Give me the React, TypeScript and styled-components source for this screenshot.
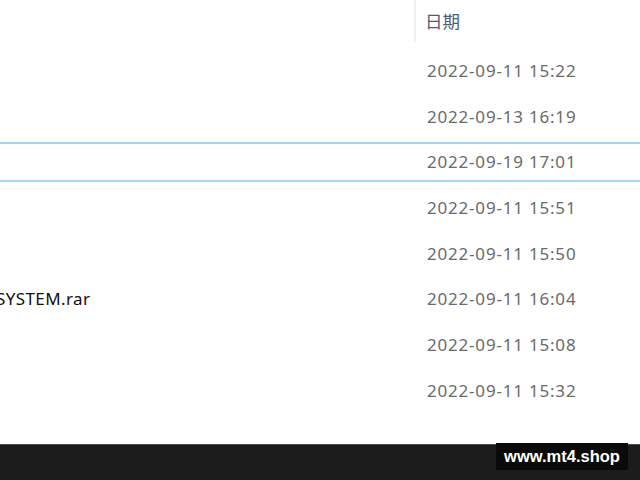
import React from 'react'
import styled, { createGlobalStyle } from 'styled-components'

const GlobalStyle = createGlobalStyle`
  html, body {
    margin: 0;
    padding: 0;
    background: #ffffff;
    overflow: hidden;
  }
  #root {
    height: 480px;
  }
`

interface FileRow {
  name: string
  date: string
  selected?: boolean
}

const rows: FileRow[] = [
  { name: '', date: '2022-09-11 15:22' },
  { name: '', date: '2022-09-13 16:19' },
  { name: '', date: '2022-09-19 17:01', selected: true },
  { name: '', date: '2022-09-11 15:51' },
  { name: '', date: '2022-09-11 15:50' },
  { name: 'SYSTEM.rar', date: '2022-09-11 16:04' },
  { name: '', date: '2022-09-11 15:08' },
  { name: '', date: '2022-09-11 15:32' },
]

const App: React.FC = () => {
  return (
    <Screen>
      <GlobalStyle />
      <Explorer>
        <Header>
          <HeaderSpacer />
          <HeaderCell>日期</HeaderCell>
        </Header>
        <List>
          {rows.map((row, i) => (
            <Row key={i} selected={row.selected}>
              <NameCell>{row.name}</NameCell>
              <DateCell>{row.date}</DateCell>
            </Row>
          ))}
        </List>
      </Explorer>
      <Taskbar />
      <Watermark>www.mt4.shop</Watermark>
    </Screen>
  )
}
export default App

const Screen = styled.div`
  position: relative;
  width: 640px;
  height: 480px;
  display: flex;
  flex-direction: column;
  overflow: hidden;
  background: #ffffff;
`

const Explorer = styled.div`
  flex: 1;
  display: flex;
  flex-direction: column;
  font-family: 'Noto Sans', 'Noto Sans CJK SC', sans-serif;
  font-size: 17px;
`

const Header = styled.div`
  height: 42px;
  display: grid;
  grid-template-columns: 416px 1fr;
`

const HeaderSpacer = styled.div`
  border-right: 2px solid #f0f0f0;
`

const HeaderCell = styled.div`
  display: flex;
  align-items: center;
  padding-left: 9px;
  padding-bottom: 1px;
  color: #4c607a;
  font-family: 'Noto Sans CJK SC', sans-serif;
  font-size: 17.5px;
`

const List = styled.div`
  padding-top: 9px;
  display: flex;
  flex-direction: column;
  gap: 5.7px;
`

const Row = styled.div<{ selected?: boolean }>`
  height: 40px;
  box-sizing: border-box;
  display: grid;
  grid-template-columns: 418px 1fr;
  align-items: center;
  padding-bottom: 1px;
  border-top: 2px solid ${(p) => (p.selected ? '#a6d6f7' : 'transparent')};
  border-bottom: 2px solid ${(p) => (p.selected ? '#a6d6f7' : 'transparent')};
`

const NameCell = styled.div`
  margin-left: -4px;
  color: #111111;
  white-space: nowrap;
  letter-spacing: 0.4px;
`

const DateCell = styled.div`
  padding-left: 9px;
  color: #6a6a6a;
  white-space: nowrap;
  letter-spacing: 0.8px;
`

const Taskbar = styled.div`
  height: 35px;
  background: #1c1c1c;
  border-top: 1px solid #4a4a4a;
`

const Watermark = styled.div`
  position: absolute;
  left: 496px;
  top: 443px;
  width: 132px;
  height: 27px;
  display: flex;
  align-items: center;
  justify-content: center;
  background: #0a0a0a;
  color: #ffffff;
  font-family: 'Liberation Sans', Arial, sans-serif;
  font-weight: bold;
  font-size: 16.5px;
`
